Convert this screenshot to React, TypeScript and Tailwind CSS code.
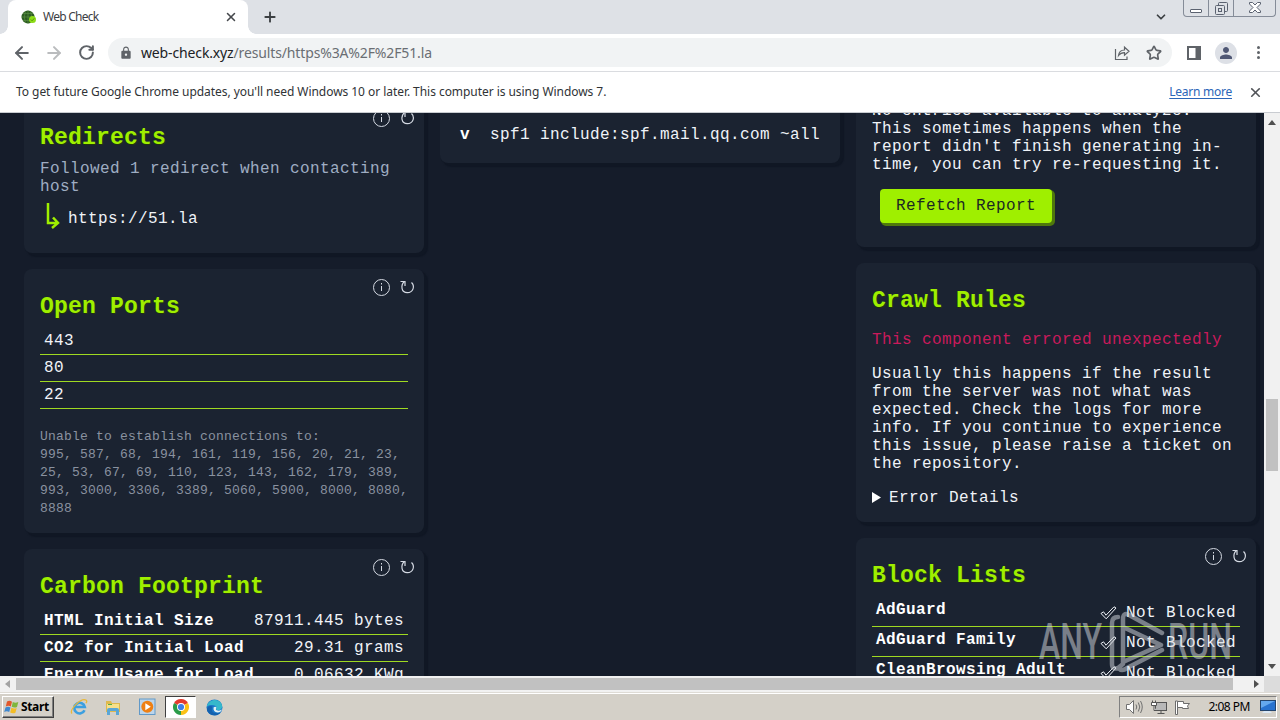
import type { ReactNode } from 'react';
import { ArrowLeft, ArrowRight, ChevronDown, Plus, RotateCw, Star, X } from 'lucide-react';
import { MdLock, MdPerson } from 'react-icons/md';

const openPorts = ['443', '80', '22'];

const closedPorts = [
  '995, 587, 68, 194, 161, 119, 156, 20, 21, 23,',
  '25, 53, 67, 69, 110, 123, 143, 162, 179, 389,',
  '993, 3000, 3306, 3389, 5060, 5900, 8000, 8080,',
  '8888',
];

const carbonRows = [
  { label: 'HTML Initial Size', value: '87911.445 bytes' },
  { label: 'CO2 for Initial Load', value: '29.31 grams' },
  { label: 'Energy Usage for Load', value: '0.06632 KWg' },
];

const blockLists = ['AdGuard', 'AdGuard Family', 'CleanBrowsing Adult'];

function CardActions() {
  return (
    <div className="absolute top-[9px] right-2 flex items-center gap-2 text-[#d5dae3]">
      <svg width="18" height="18" viewBox="0 0 18 18" fill="none" stroke="currentColor">
        <circle cx="9.500" cy="9.500" r="8" />
        <path d="M9.500 5v1.500M9.500 8v5" />
      </svg>
      <svg width="18" height="18" viewBox="0 0 18 18" fill="none" stroke="currentColor" strokeWidth="1.2">
        <path d="M2.500 3.500H7V8" />
        <path d="M6.500 3.500C2.500 7 3 14.500 9.300 14.700C15.500 14.500 17 8 13.500 4.500" />
      </svg>
    </div>
  );
}

function Card({ title, actions, className, children }: {
  title?: string;
  actions?: boolean;
  className?: string;
  children?: ReactNode;
}) {
  return (
    <section className={`relative shrink-0 rounded-lg bg-[#1b2331] px-4 pt-4 shadow-[3px_3px_1px_1px_#101724] ${className ?? ''}`}>
      {actions && <CardActions />}
      {title && (
        <h2 className="flex h-[43px] items-center text-[23px] leading-7 font-bold tracking-[0.2px] text-[#9fef00] [text-shadow:1px_1px_0_#22350a]">
          {title}
        </h2>
      )}
      {children}
    </section>
  );
}

function WindowButtons() {
  return (
    <div className="flex h-[17px] w-[93px] rounded-b-[4px] border border-t-0 border-[#858c98] text-[#5b6270]">
      <div className="flex w-[25px] items-end justify-center border-r border-[#858c98] pb-[3px]">
        <div className="h-1 w-3 rounded-[1px] border border-current bg-white" />
      </div>
      <div className="flex w-[25px] justify-center border-r border-[#858c98] pt-[2px]">
        <svg width="13" height="13" viewBox="0 0 13 13" fill="none" stroke="currentColor">
          <path d="M3.500 3.500V1.500a1 1 0 0 1 1-1h7a1 1 0 0 1 1 1v7a1 1 0 0 1-1 1h-2" />
          <rect x=".5" y="3.500" width="9" height="9" rx="1" />
          <rect x="3.500" y="6.500" width="3" height="3" />
        </svg>
      </div>
      <div className="flex flex-1 justify-center pt-[2px]">
        <svg width="12" height="11" viewBox="0 0 12 11" fill="#fff" stroke="currentColor">
          <path d="M.5.5h3L6 3 8.500.5h3v1.500L8 5.500l3.500 3.500v1.500h-3L6 8l-2.500 2.500h-3V9L4 5.500.5 2z" />
        </svg>
      </div>
    </div>
  );
}

function TabStrip() {
  return (
    <div className="flex h-[34px] shrink-0 bg-[#dee1e6] pl-2">
      <div className="relative flex w-60 items-center rounded-t-lg bg-white pr-[10px] pl-[13px]">
        <div className="absolute bottom-0 -left-2 size-2 bg-[radial-gradient(circle_at_0_0,#dee1e6_7.5px,#fff_8px)]" />
        <div className="absolute -right-2 bottom-0 size-2 bg-[radial-gradient(circle_at_100%_0,#dee1e6_7.5px,#fff_8px)]" />
        <svg width="16" height="16" viewBox="0 0 16 16">
          <circle cx="7" cy="8" r="6.500" fill="#2b5a20" />
          <path d="M.5 8h13M7 1.500v13M2 4.500h10M2 11.500h10M4.500 2q-2.500 6 0 12M9.500 2q2.500 6 0 12" stroke="#5c9444" strokeWidth=".6" fill="none" />
          <circle cx="11.500" cy="10.500" r="3.500" fill="#8cdc16" />
          <path d="m9.800 10.500 1.300 1.300 2.200-2.500" stroke="#56960d" fill="none" />
        </svg>
        <span className="ml-[6px] flex-1 text-[12px] tracking-[-0.75px] text-[#3c4043]">Web Check</span>
        <X size={14} strokeWidth={2.6} className="text-[#45484c]" />
      </div>
      <Plus size={16} strokeWidth={2.8} className="mt-[9px] ml-[14px] text-[#3c4043]" />
      <ChevronDown size={14} strokeWidth={3} className="mt-[10px] mr-[15px] ml-auto text-[#3c4043]" />
      <div className="mr-[4px]"><WindowButtons /></div>
    </div>
  );
}

function Toolbar() {
  return (
    <div className="flex h-[38px] shrink-0 items-center border-b border-[#dadce0] bg-white text-[#5f6368]">
      <ArrowLeft size={20} strokeWidth={2.4} className="ml-[12px]" />
      <ArrowRight size={20} strokeWidth={2.4} className="ml-[12px] text-[#babcbe]" />
      <RotateCw size={17} strokeWidth={2.8} className="ml-[14px]" />
      <div className="ml-[13px] flex h-[29px] w-[1064px] items-center rounded-full bg-[#f1f3f4] pl-[11px]">
        <MdLock size={14} />
        <span className="ml-[8px] text-[14px] tracking-[-0.14px] text-[#6a6e73]">
          <span className="text-[#202124]">web-check.xyz</span>/results/https%3A%2F%2F51.la
        </span>
        <svg className="mr-[15px] ml-auto" width="17" height="16" viewBox="0 0 17 16" fill="none" stroke="currentColor" strokeWidth="1.2">
          <path d="M1.500 4v10.500h11.500v-3" />
          <path d="M4.500 10.500C5 6.500 7.500 5 10.500 5V2.200l4.500 4-4.500 4V7.600C8 7.600 6 8.500 4.500 10.500z" />
        </svg>
        <Star size={16} strokeWidth={2.5} className="mr-[10px]" />
      </div>
      <svg className="ml-[15px]" width="14" height="14" viewBox="0 0 14 14" fill="currentColor">
        <path fillRule="evenodd" d="M0 0h14v14H0zM2 2v10h6.500V2z" />
      </svg>
      <div className="ml-[14px] flex size-[22px] items-center justify-center rounded-full bg-[#dde0e6] text-[#4f5774]">
        <MdPerson size={18} />
      </div>
      <div className="ml-[20px] flex flex-col gap-[2px]">
        <i className="size-[3px] rounded-full bg-current" />
        <i className="size-[3px] rounded-full bg-current" />
        <i className="size-[3px] rounded-full bg-current" />
      </div>
    </div>
  );
}

function InfoBar() {
  return (
    <div className="flex h-[41px] shrink-0 items-center border-b border-[#c9ccd1] bg-white pr-[17px] pl-4 text-[12px] text-[#303336]">
      <span className="tracking-[-0.05px]">
        To get future Google Chrome updates, you'll need Windows 10 or later. This computer is using Windows 7.
      </span>
      <a className="ml-auto tracking-[-0.25px] text-[#2b66b8] underline underline-offset-2">Learn more</a>
      <X size={15} strokeWidth={2.6} className="ml-[16px] text-[#505357]" />
    </div>
  );
}

function Results() {
  return (
    <main className="flex flex-1 gap-4 overflow-hidden bg-[#151c2a] pl-6 font-['Liberation_Mono',monospace] text-[16px] leading-[18px] tracking-[0.4px] whitespace-nowrap text-[#f0f3f8]">
      <div className="-mt-[13px] flex w-[400px] shrink-0 flex-col gap-4">
        <Card title="Redirects" actions className="h-[153px]">
          <p className="pt-px text-[#9fadc3]">Followed 1 redirect when contacting<br />host</p>
          <div className="mt-[7px] flex items-center">
            <svg className="ml-[5px]" width="15" height="27" viewBox="0 0 15 27" fill="none" stroke="#9fef00" strokeWidth="2.500">
              <path d="M3 0v20h9M8 14.500l5 5.500-6 5" />
            </svg>
            <span className="ml-2 pt-[5px]">https://51.la</span>
          </div>
        </Card>

        <Card title="Open Ports" actions className="h-[264px]">
          {openPorts.map((port) => (
            <div key={port} className="h-[27px] border-b border-[#9fd921] px-1 pt-[4px]">{port}</div>
          ))}
          <div className="mt-[19px] text-[13px] tracking-[0.2px] text-[#8a92a0]">
            <p>Unable to establish connections to:</p>
            {closedPorts.map((line) => <p key={line}>{line}</p>)}
          </div>
        </Card>

        <Card title="Carbon Footprint" actions className="h-[264px]">
          {carbonRows.map((row) => (
            <div key={row.label} className="flex h-[27px] justify-between border-b border-[#9fd921] px-1 pt-[4px]">
              <span className="font-bold text-white">{row.label}</span>
              <span>{row.value}</span>
            </div>
          ))}
        </Card>
      </div>

      <div className="-mt-[13px] w-[400px] shrink-0">
        <Card className="h-[63px]">
          <div className="flex gap-5 pt-[10px] pl-1">
            <span className="font-bold text-white">v</span>
            <span>spf1 include:spf.mail.qq.com ~all</span>
          </div>
        </Card>
      </div>

      <div className="-mt-[29px] flex w-[400px] shrink-0 flex-col gap-4">
        <Card className="h-[163px]">
          <p className="pt-[2px]">
            No entries available to analyze.<br />
            This sometimes happens when the<br />
            report didn't finish generating in-<br />
            time, you can try re-requesting it.
          </p>
          <button className="mt-[15px] ml-2 h-[34px] w-[172px] rounded-[4px] bg-[#9fef00] tracking-[0.4px] text-[#1b2a22] shadow-[2px_2px_0_1px_#4f780c]">
            Refetch Report
          </button>
        </Card>

        <Card title="Crawl Rules" className="h-[259px]">
          <p className="mt-[9px] text-[#c91a5b]">This component errored unexpectedly</p>
          <p className="mt-4">
            Usually this happens if the result<br />
            from the server was not what was<br />
            expected. Check the logs for more<br />
            info. If you continue to experience<br />
            this issue, please raise a ticket on<br />
            the repository.
          </p>
          <div className="mt-4 flex items-center gap-2">
            <svg width="9" height="12" viewBox="0 0 9 12" fill="#fff"><path d="M0 0l9 5.500L0 11z" /></svg>
            <span>Error Details</span>
          </div>
        </Card>

        <Card title="Block Lists" actions className="h-[264px]">
          {blockLists.map((name) => (
            <div key={name} className="flex h-[30px] items-start justify-between border-b border-[#9fd921] px-1 pt-[4px]">
              <span className="font-bold text-white">{name}</span>
              <span className="flex items-center gap-[9px] pt-[3px]">
                <svg width="17" height="15" viewBox="0 0 17 15" fill="none" stroke="currentColor">
                  <path d="M1 7.500l2.500-1.700L6 9.200 14 .8l2 1.200L6.200 12.800z" />
                </svg>
                <span>Not Blocked</span>
              </span>
            </div>
          ))}
        </Card>
      </div>
    </main>
  );
}

function VerticalScrollbar() {
  return (
    <div className="flex w-4 shrink-0 flex-col items-center bg-[#f1f1f1] py-[7px]">
      <svg width="8" height="5" fill="#505050"><path d="M0 5l4-5 4 5z" /></svg>
      <div className="mt-[274px] h-[72px] w-3 bg-[#c1c1c1]" />
      <svg className="mt-auto" width="8" height="5" fill="#505050"><path d="M0 0h8L4 5z" /></svg>
    </div>
  );
}

function HorizontalScrollbar() {
  return (
    <div className="flex h-4 shrink-0 items-center bg-[#f1f1f1]">
      <svg className="ml-[5px]" width="5" height="8" fill="#a3a3a3"><path d="M5 0v8L0 4z" /></svg>
      <div className="ml-[6px] h-3 w-[1217px] bg-[#c1c1c1]" />
      <svg className="ml-[21px]" width="5" height="8" fill="#505050"><path d="M0 0l5 4-5 4z" /></svg>
      <div className="ml-auto h-4 w-4 bg-[#dcdcdc]" />
    </div>
  );
}

function Taskbar() {
  return (
    <footer className="flex h-[26px] shrink-0 items-center bg-[#d4d0c8] pr-[3px] pl-[2px] shadow-[0_-1px_0_#fff]">
      <div className="flex h-[22px] w-[52px] items-center border border-t-white border-r-[#404040] border-b-[#404040] border-l-white pl-[1px] shadow-[inset_-1px_-1px_0_#808080]">
        <svg width="16" height="16" viewBox="0 0 16 16">
          <path d="M3 2.500q2.500-1.500 5 .2L6.800 7.500q-2.300-1.500-5 0z" fill="#e2582b" />
          <path d="M8.800 3q2.600 1.300 5.500 0L13 8q-2.500 1.200-5.300-.2z" fill="#7fb63b" />
          <path d="M1.500 8.500q2.500-1.500 5 0L5.200 13q-2.400-1.500-5 0z" fill="#3f88cf" />
          <path d="M7.400 8.800q2.600 1.400 5.300.2l-1.300 4.700q-2.600 1.200-5.200-.3z" fill="#f3bd26" />
        </svg>
        <span className="ml-[1px] text-[12px] font-bold tracking-[-0.35px] text-black">Start</span>
      </div>

      <svg className="ml-[16px]" width="18" height="18" viewBox="0 0 18 18" fill="none">
        <path d="M14.500 12.200A5.300 5.300 0 1 1 14.800 9H5" stroke="#3b9fe0" strokeWidth="2.600" />
        <path d="M2 15.500C-1 12 11-1 16.300 2.200c.8.600.4 2-.4 3" stroke="#e8b83a" strokeWidth="1.300" />
      </svg>
      <svg className="ml-[16px]" width="18" height="18" viewBox="0 0 18 18">
        <path d="M2 3h5l1 2h8v9H2z" fill="#dfb94e" />
        <path d="M3 6h12v7H3z" fill="#f7e08a" />
        <path d="M4 6h4v1H4z" fill="#52ae48" />
        <path d="M3 17v-5q0-2 2-2h8q2 0 2 2v5h-3v-4H6v4z" fill="#5aa6d6" />
      </svg>
      <svg className="ml-[17px]" width="17" height="18" viewBox="0 0 17 18">
        <rect x=".5" y="1" width="15.500" height="15.500" fill="#bcd5eb" stroke="#6199c8" />
        <circle cx="8.300" cy="8.700" r="6" fill="#ee8014" />
        <path d="M6.300 5.200v7l5.500-3.500z" fill="#fff" />
      </svg>
      <div className="ml-[9px] flex h-[22px] w-[31px] items-center justify-center border border-t-[#404040] border-r-white border-b-white border-l-[#404040] bg-white">
        <svg width="16" height="16" viewBox="0 0 16 16">
          <path d="M8 8L1.070 4A8 8 0 0 1 14.930 4z" fill="#e33b2e" />
          <path d="M8 8L14.930 4A8 8 0 0 1 8 16z" fill="#fbc116" />
          <path d="M8 8L8 16A8 8 0 0 1 1.070 4z" fill="#2b9c49" />
          <circle cx="8" cy="8" r="4" fill="#fff" />
          <circle cx="8" cy="8" r="3.100" fill="#3d7fe8" />
        </svg>
      </div>
      <svg className="ml-[10px]" width="17" height="17" viewBox="0 0 17 17">
        <circle cx="8.500" cy="8.500" r="8" fill="#1b78ca" />
        <path d="M.8 7.500C2 1 11-1.500 15 4c2.200 3.500 1 6.500-2 7-2.500.3-3.500-.5-2.500-2 .8-2.500-5-4.500-9.700-1.500z" fill="#36b8cb" />
        <path d="M6.500 7.500C4 12 8 16 14.500 13.500 11 18 3.500 17 1.200 12 0 8 3.500 5.800 6.500 7.500z" fill="#1562ae" />
        <path d="M7.500 8.500q2-1.500 3 .2-1.800 2.300 1.500 2.900 2 .3 4-1-1.300 3.200-4.500 3-4.500-.8-4-5.100z" fill="#e4f3f5" />
      </svg>

      <div className="ml-auto flex h-[22px] items-center border border-t-[#808080] border-r-white border-b-white border-l-[#808080] pl-[6px] text-[12px] text-black">
        <svg width="17" height="14" viewBox="0 0 17 14" fill="#fff" stroke="#707070">
          <path d="M.5 4.500h3l4-4v13l-4-4h-3z" />
          <path d="M10 4.500q1.500 2.500 0 5M12.300 2.500q3 4.500 0 9M14.500 1q3.500 6 0 12" fill="none" />
        </svg>
        <svg className="ml-[8px]" width="16" height="15" viewBox="0 0 16 15" fill="#fff" stroke="#555">
          <rect x="4.500" y="2.500" width="11" height="8" fill="#b8b8b8" />
          <path d="M.5 2.500h5v3h-5zM1.500.5v2M4.500.5v2M3 5.500v5h2M6.500 13.500h7M10 10.500v3" />
        </svg>
        <svg className="ml-[8px]" width="16" height="15" viewBox="0 0 16 15" fill="#fff" stroke="#6c6c6c">
          <path d="M.5 1v13.500h2V1z" />
          <path d="M2.500 1.500h6v2h6l-2 2.500 1 2.500h-6v-1h-5z" />
        </svg>
        <span className="ml-[17px] tracking-[-0.5px]">2:08 PM</span>
        <svg className="ml-[10px]" width="16" height="14" viewBox="0 0 16 14">
          <rect x=".5" y=".5" width="15" height="10" fill="#2872cf" stroke="#24456e" />
          <path d="M1 1h14L1 8z" fill="#64a8ee" />
          <path d="M4 11h6l2 2H2z" fill="#dbe8f4" />
        </svg>
      </div>
    </footer>
  );
}

function Watermark() {
  return (
    <svg className="pointer-events-none absolute top-[607px] left-[1038px] opacity-50" width="196" height="66" viewBox="0 0 196 66">
      <g fill="#d6dae0" fontFamily="Roboto, sans-serif" fontSize="50" fontWeight="500">
        <text x="1" y="52" textLength="63" lengthAdjust="spacingAndGlyphs">ANY</text>
        <text x="130" y="52" textLength="64" lengthAdjust="spacingAndGlyphs">RUN</text>
      </g>
      <path
        d="M80 10Q74 10 74 16V57Q74 63 80 61L85 57V12Q85 5 91 8L124 26M85 20L123 38L85 55M80 61Q84 65 89 61L124 43"
        fill="none"
        stroke="#d6dae0"
        strokeWidth="4.5"
        strokeLinejoin="round"
        strokeLinecap="round"
      />
    </svg>
  );
}

export default function App() {
  return (
    <div className="relative flex h-[720px] w-[1280px] flex-col overflow-hidden bg-white font-['Noto_Sans',sans-serif]">
      <TabStrip />
      <Toolbar />
      <InfoBar />
      <div className="flex h-[563px] shrink-0">
        <Results />
        <VerticalScrollbar />
      </div>
      <HorizontalScrollbar />
      <div className="h-[2px] shrink-0 bg-[#dedbd5]" />
      <Taskbar />
      <Watermark />
    </div>
  );
}
